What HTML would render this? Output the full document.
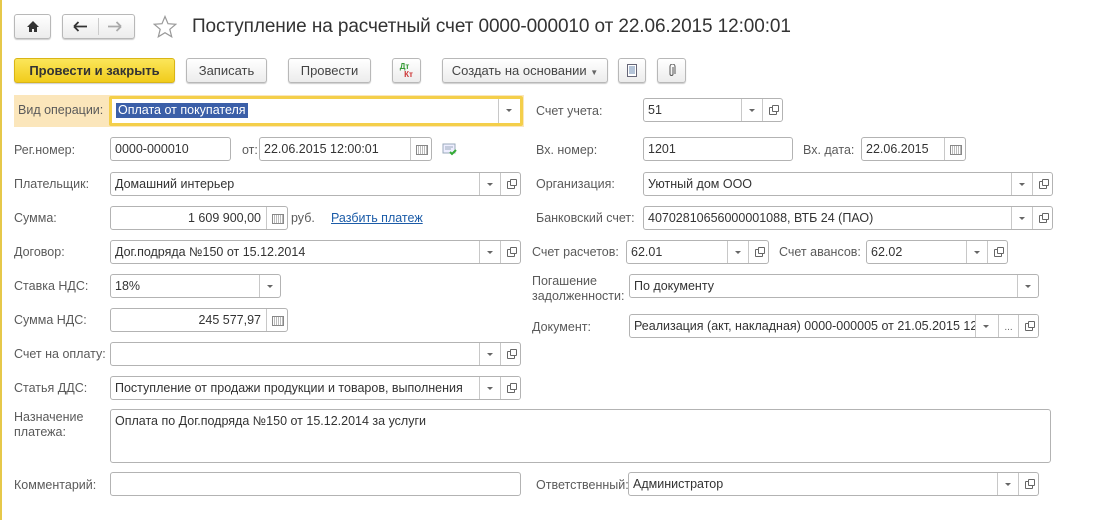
<!DOCTYPE html>
<html><head><meta charset="utf-8"><style>
*{box-sizing:border-box;margin:0;padding:0}
body{width:1107px;height:520px;background:#fff;position:relative;overflow:hidden;font-family:"Liberation Sans",Arial,sans-serif;font-size:12.5px;color:#333}
.a{position:absolute}
.lb{position:absolute;color:#5a5a5a;white-space:nowrap;line-height:15px}
.f{position:absolute;border:1px solid #b3b3b3;border-radius:3px;background:#fff;height:24px;overflow:hidden;white-space:nowrap}
.f .t{position:absolute;left:4px;top:4px;line-height:15px;color:#333}
.f .r{left:auto;right:4px}
.s{position:absolute;top:0;bottom:0;width:21px;border-left:1px solid #c8c8c8}
.dd:after{content:"";position:absolute;left:7px;top:10px;border:3px solid transparent;border-top:3px solid #666;border-bottom:0}
.op:after{content:"";position:absolute;left:6px;top:8px;width:6px;height:6px;border:1px solid #666;border-radius:1px}
.op:before{content:"";position:absolute;left:9px;top:6px;width:5px;height:5px;border:1px solid #666;background:#fff;z-index:1;border-radius:1px}
.cal:after{content:"";position:absolute;left:5px;top:7px;width:10px;height:8px;border:1px solid #888;background:repeating-linear-gradient(90deg,#fff 0 1px,#bbb 1px 2px)}
.btn{position:absolute;height:25px;border:1px solid #b8b8b8;border-radius:3px;background:linear-gradient(#fff,#ececec);box-shadow:0 1px 1px #ccc;text-align:center;line-height:23px;color:#444;font-size:13px}
</style></head><body>
<div class="a" style="left:0;top:0;width:2px;height:520px;background:#e6c84a"></div>
<div class="btn" style="left:14px;top:14px;width:37px;height:25px"><svg width="14" height="13" viewBox="0 0 14 13" style="margin-top:5px"><path d="M7 1L1 7h2v5h3V9h2v3h3V7h2z" fill="#333"/></svg></div>
<div class="btn" style="left:62px;top:14px;width:73px;height:25px"></div>
<div class="a" style="left:98px;top:18px;width:1px;height:17px;background:#ccc"></div>
<svg class="a" style="left:73px;top:21px" width="14" height="11"><path d="M1 5.5h13M1 5.5l4.5-4.5M1 5.5l4.5 4.5" stroke="#333" stroke-width="1.8" fill="none"/></svg>
<svg class="a" style="left:108px;top:21px" width="14" height="11"><path d="M0 5.5h13M13 5.5l-4.5-4.5M13 5.5l-4.5 4.5" stroke="#aaa" stroke-width="1.8" fill="none"/></svg>
<svg class="a" style="left:153px;top:15px" width="24" height="23"><path d="M12 1.5l3 7.2 7.7.6-5.9 5 1.9 7.5L12 17.7 5.3 21.8l1.9-7.5-5.9-5 7.7-.6z" fill="none" stroke="#999" stroke-width="1.2"/></svg>
<div class="a" style="left:192px;top:16px;font-size:19px;color:#333;white-space:nowrap;letter-spacing:-0.1px">Поступление на расчетный счет 0000-000010 от 22.06.2015 12:00:01</div>
<div class="btn" style="left:14px;top:58px;width:161px;background:linear-gradient(#fbe65a,#f1cc1c);border-color:#d9b516;color:#333;font-weight:bold">Провести и закрыть</div>
<div class="btn" style="left:186px;top:58px;width:81px">Записать</div>
<div class="btn" style="left:288px;top:58px;width:83px">Провести</div>
<div class="btn" style="left:392px;top:58px;width:29px;font-size:8px;line-height:8px;font-weight:bold"><div style="color:#393;margin-top:4px;margin-left:-4px">Дт</div><div style="color:#c33;margin-left:4px">Кт</div></div>
<div class="btn" style="left:442px;top:58px;width:166px">Создать на основании <span style="font-size:8px;color:#666">▼</span></div>
<div class="btn" style="left:618px;top:58px;width:28px"><svg width="10" height="13" style="margin-top:5px"><rect x=".5" y=".5" width="9" height="12" fill="#fff" stroke="#667"/><path d="M2 3h6M2 5h6M2 7h6M2 9h6" stroke="#6a8ab0"/></svg></div>
<div class="btn" style="left:657px;top:58px;width:29px"><svg width="8" height="14" style="margin-top:5px"><path d="M5 3v7a1.5 1.5 0 01-3 0V2.5a2.5 2.5 0 015 0V10" fill="none" stroke="#555"/></svg></div>
<div class="a" style="left:14px;top:95px;width:510px;height:32px;background:#fbe6bb"></div>
<div class="lb" style="left:18px;top:103px">Вид операции:</div>
<div class="f" style="left:109px;top:96px;width:414px;height:30px;border:3px solid #f4cf4a;border-radius:2px"><span class="a" style="left:4px;top:4px;background:#3b5fa8;color:#fff;line-height:15px;padding:0 2px">Оплата от покупателя</span><div class="s dd" style="right:0;width:22px;top:0"></div></div>
<div class="lb" style="left:14px;top:143px">Рег.номер:</div>
<div class="f" style="left:110px;top:137px;width:121px"><span class="t">0000-000010</span></div>
<div class="lb" style="left:242px;top:143px">от:</div>
<div class="f" style="left:259px;top:137px;width:173px"><span class="t">22.06.2015 12:00:01</span><div class="s cal" style="right:0"></div></div>
<svg class="a" style="left:442px;top:143px" width="16" height="13"><rect x="1" y="1" width="12" height="9" fill="#eef" stroke="#9ab"/><path d="M3 4h8M3 6h6" stroke="#9ab"/><path d="M8 9l2 2 4-4" stroke="#3a3" stroke-width="2" fill="none"/></svg>
<div class="lb" style="left:14px;top:177px">Плательщик:</div>
<div class="f" style="left:110px;top:172px;width:411px"><span class="t">Домашний интерьер</span><div class="s dd" style="right:20px"></div><div class="s op" style="right:0;width:20px"></div></div>
<div class="lb" style="left:14px;top:211px">Сумма:</div>
<div class="f" style="left:110px;top:206px;width:178px"><span class="t r" style="right:26px">1 609 900,00</span><div class="s cal" style="right:0"></div></div>
<div class="lb" style="left:291px;top:211px">руб.</div>
<div class="lb" style="left:331px;top:211px;color:#1c5ca8;text-decoration:underline">Разбить платеж</div>
<div class="lb" style="left:14px;top:245px">Договор:</div>
<div class="f" style="left:110px;top:240px;width:411px"><span class="t">Дог.подряда №150 от 15.12.2014</span><div class="s dd" style="right:20px"></div><div class="s op" style="right:0;width:20px"></div></div>
<div class="lb" style="left:14px;top:279px">Ставка НДС:</div>
<div class="f" style="left:110px;top:274px;width:171px"><span class="t">18%</span><div class="s dd" style="right:0"></div></div>
<div class="lb" style="left:14px;top:313px">Сумма НДС:</div>
<div class="f" style="left:110px;top:308px;width:178px"><span class="t r" style="right:26px">245 577,97</span><div class="s cal" style="right:0"></div></div>
<div class="lb" style="left:14px;top:347px">Счет на оплату:</div>
<div class="f" style="left:110px;top:342px;width:411px"><div class="s dd" style="right:20px"></div><div class="s op" style="right:0;width:20px"></div></div>
<div class="lb" style="left:14px;top:381px">Статья ДДС:</div>
<div class="f" style="left:110px;top:376px;width:411px"><span class="t">Поступление от продажи продукции и товаров, выполнения</span><div class="s dd" style="right:20px;background:#fff"></div><div class="s op" style="right:0;width:20px;background:#fff"></div></div>
<div class="lb" style="left:14px;top:410px">Назначение<br>платежа:</div>
<div class="f" style="left:110px;top:409px;width:941px;height:54px;white-space:normal"><span class="t">Оплата по Дог.подряда №150 от 15.12.2014 за услуги</span></div>
<div class="lb" style="left:14px;top:478px">Комментарий:</div>
<div class="f" style="left:110px;top:472px;width:411px"></div>
<div class="lb" style="left:536px;top:104px">Счет учета:</div>
<div class="f" style="left:643px;top:98px;width:140px"><span class="t">51</span><div class="s dd" style="right:20px"></div><div class="s op" style="right:0;width:20px"></div></div>
<div class="lb" style="left:536px;top:143px">Вх. номер:</div>
<div class="f" style="left:643px;top:137px;width:150px"><span class="t">1201</span></div>
<div class="lb" style="left:803px;top:143px">Вх. дата:</div>
<div class="f" style="left:861px;top:137px;width:105px"><span class="t">22.06.2015</span><div class="s cal" style="right:0"></div></div>
<div class="lb" style="left:536px;top:177px">Организация:</div>
<div class="f" style="left:643px;top:172px;width:410px"><span class="t">Уютный дом ООО</span><div class="s dd" style="right:20px"></div><div class="s op" style="right:0;width:20px"></div></div>
<div class="lb" style="left:536px;top:211px">Банковский счет:</div>
<div class="f" style="left:643px;top:206px;width:410px"><span class="t">40702810656000001088, ВТБ 24 (ПАО)</span><div class="s dd" style="right:20px"></div><div class="s op" style="right:0;width:20px"></div></div>
<div class="lb" style="left:532px;top:245px">Счет расчетов:</div>
<div class="f" style="left:626px;top:240px;width:143px"><span class="t">62.01</span><div class="s dd" style="right:20px"></div><div class="s op" style="right:0;width:20px"></div></div>
<div class="lb" style="left:779px;top:245px">Счет авансов:</div>
<div class="f" style="left:866px;top:240px;width:142px"><span class="t">62.02</span><div class="s dd" style="right:20px"></div><div class="s op" style="right:0;width:20px"></div></div>
<div class="lb" style="left:532px;top:274px">Погашение<br>задолженности:</div>
<div class="f" style="left:629px;top:274px;width:410px"><span class="t">По документу</span><div class="s dd" style="right:0"></div></div>
<div class="lb" style="left:532px;top:320px">Документ:</div>
<div class="f" style="left:629px;top:314px;width:410px"><span class="t">Реализация (акт, накладная) 0000-000005 от 21.05.2015 12:00:00</span><div class="s" style="right:40px;width:23px;background:#fff"></div><div class="s dd" style="right:40px;width:23px"></div><div class="s" style="right:20px;width:20px;background:#fff;color:#666;font-size:10px;text-align:center;line-height:26px">...</div><div class="s op" style="right:0;width:20px;background:#fff"></div></div>
<div class="lb" style="left:536px;top:478px">Ответственный:</div>
<div class="f" style="left:628px;top:472px;width:411px"><span class="t">Администратор</span><div class="s dd" style="right:20px"></div><div class="s op" style="right:0;width:20px"></div></div>
</body></html>
